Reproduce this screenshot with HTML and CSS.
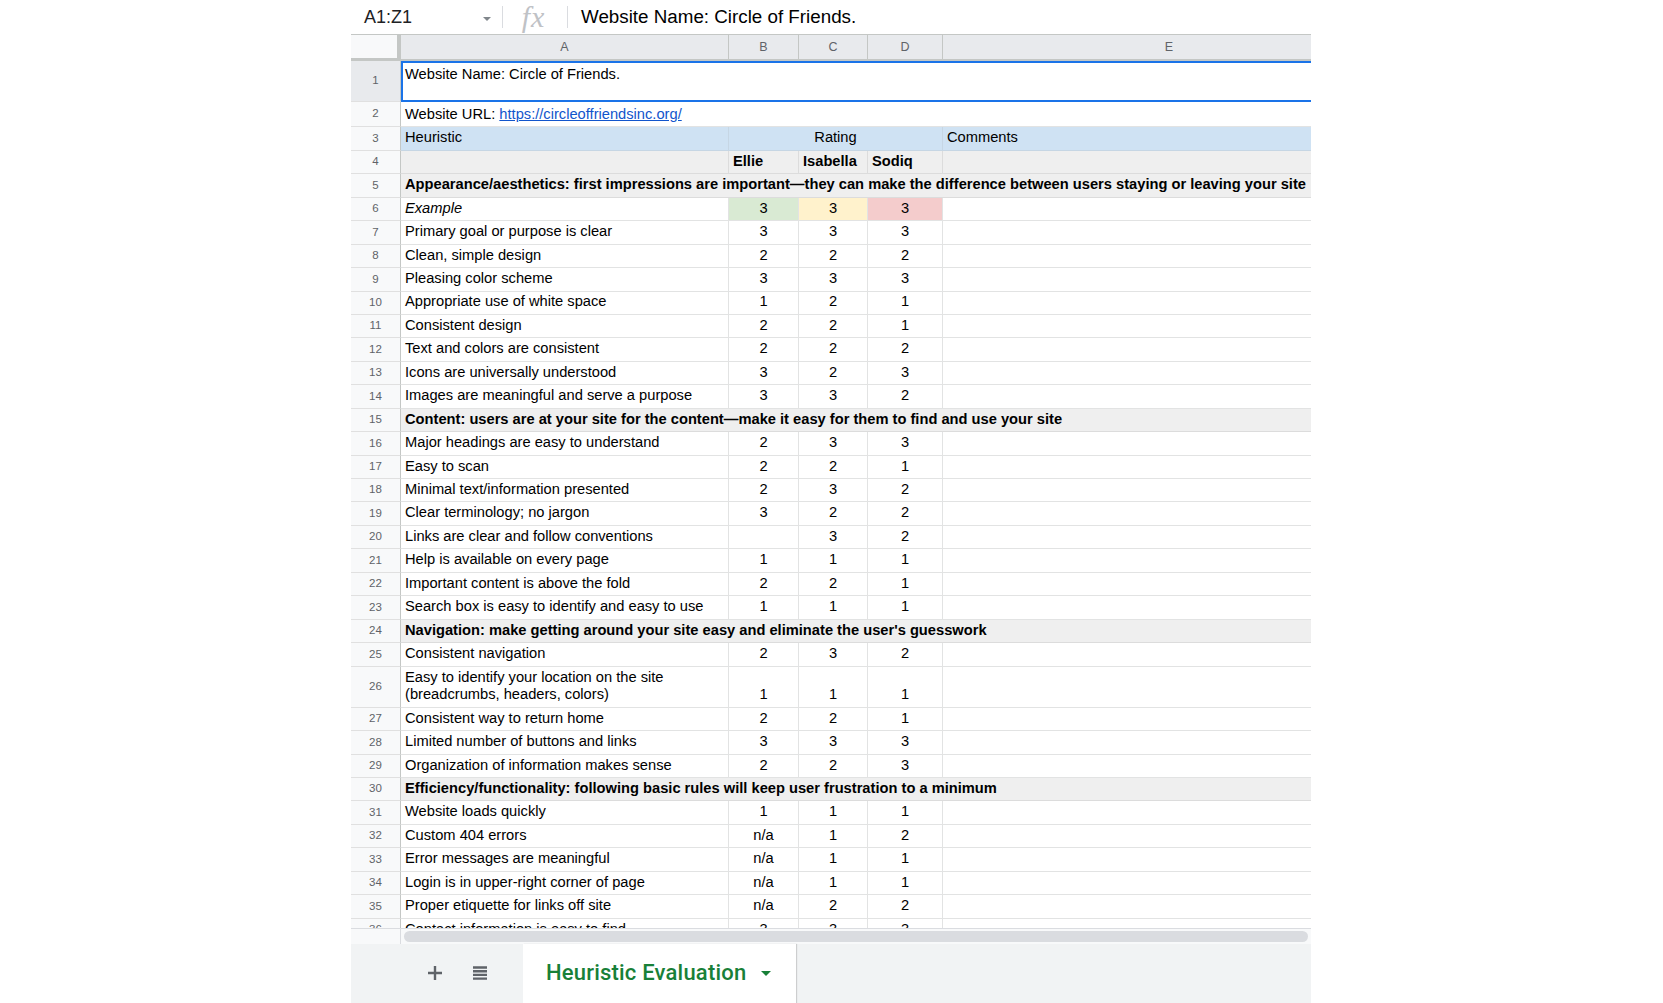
FILE: index.html
```html
<!DOCTYPE html>
<html>
<head>
<meta charset="utf-8">
<link rel="stylesheet" href="styles.css">
</head>
<body>
<div class="app">
  <div class="formula-bar">
    <div class="namebox"><span class="range">A1:Z1</span><span class="caret"></span></div>
    <div class="sep"></div>
    <div class="fx">fx</div>
    <div class="sep"></div>
    <div class="formula">Website Name: Circle of Friends.</div>
  </div>
  <div class="grid">
    <div class="row head">
      <div class="corner"></div>
      <div class="ch">A</div><div class="ch">B</div><div class="ch">C</div><div class="ch">D</div><div class="ch">E</div>
    </div>
    <div class="row r1">
      <div class="rh sel">1</div>
      <div class="c wide selbox">Website Name: Circle of Friends.</div>
    </div>
    <div class="row r2">
      <div class="rh">2</div>
      <div class="c wide">Website URL:&nbsp;<a class="link" href="#">https://circleoffriendsinc.org/</a></div>
    </div>
    <div class="row blue">
      <div class="rh">3</div>
      <div class="c">Heuristic</div>
      <div class="c merged">Rating</div>
      <div class="c">Comments</div>
    </div>
    <div class="row gray b">
      <div class="rh">4</div>
      <div class="c"></div><div class="c">Ellie</div><div class="c">Isabella</div><div class="c">Sodiq</div><div class="c"></div>
    </div>
    <div class="row gray b">
      <div class="rh">5</div>
      <div class="c wide">Appearance/aesthetics: first impressions are important—they can make the difference between users staying or leaving your site</div>
    </div>
    <div class="row">
      <div class="rh">6</div>
      <div class="c i">Example</div><div class="c n green">3</div><div class="c n yellow">3</div><div class="c n red">3</div><div class="c"></div>
    </div>
    <div class="row"><div class="rh">7</div><div class="c">Primary goal or purpose is clear</div><div class="c n">3</div><div class="c n">3</div><div class="c n">3</div><div class="c"></div></div>
    <div class="row"><div class="rh">8</div><div class="c">Clean, simple design</div><div class="c n">2</div><div class="c n">2</div><div class="c n">2</div><div class="c"></div></div>
    <div class="row"><div class="rh">9</div><div class="c">Pleasing color scheme</div><div class="c n">3</div><div class="c n">3</div><div class="c n">3</div><div class="c"></div></div>
    <div class="row"><div class="rh">10</div><div class="c">Appropriate use of white space</div><div class="c n">1</div><div class="c n">2</div><div class="c n">1</div><div class="c"></div></div>
    <div class="row"><div class="rh">11</div><div class="c">Consistent design</div><div class="c n">2</div><div class="c n">2</div><div class="c n">1</div><div class="c"></div></div>
    <div class="row"><div class="rh">12</div><div class="c">Text and colors are consistent</div><div class="c n">2</div><div class="c n">2</div><div class="c n">2</div><div class="c"></div></div>
    <div class="row"><div class="rh">13</div><div class="c">Icons are universally understood</div><div class="c n">3</div><div class="c n">2</div><div class="c n">3</div><div class="c"></div></div>
    <div class="row"><div class="rh">14</div><div class="c">Images are meaningful and serve a purpose</div><div class="c n">3</div><div class="c n">3</div><div class="c n">2</div><div class="c"></div></div>
    <div class="row gray b"><div class="rh">15</div><div class="c wide">Content: users are at your site for the content—make it easy for them to find and use your site</div></div>
    <div class="row"><div class="rh">16</div><div class="c">Major headings are easy to understand</div><div class="c n">2</div><div class="c n">3</div><div class="c n">3</div><div class="c"></div></div>
    <div class="row"><div class="rh">17</div><div class="c">Easy to scan</div><div class="c n">2</div><div class="c n">2</div><div class="c n">1</div><div class="c"></div></div>
    <div class="row"><div class="rh">18</div><div class="c">Minimal text/information presented</div><div class="c n">2</div><div class="c n">3</div><div class="c n">2</div><div class="c"></div></div>
    <div class="row"><div class="rh">19</div><div class="c">Clear terminology; no jargon</div><div class="c n">3</div><div class="c n">2</div><div class="c n">2</div><div class="c"></div></div>
    <div class="row"><div class="rh">20</div><div class="c">Links are clear and follow conventions</div><div class="c n"></div><div class="c n">3</div><div class="c n">2</div><div class="c"></div></div>
    <div class="row"><div class="rh">21</div><div class="c">Help is available on every page</div><div class="c n">1</div><div class="c n">1</div><div class="c n">1</div><div class="c"></div></div>
    <div class="row"><div class="rh">22</div><div class="c">Important content is above the fold</div><div class="c n">2</div><div class="c n">2</div><div class="c n">1</div><div class="c"></div></div>
    <div class="row"><div class="rh">23</div><div class="c">Search box is easy to identify and easy to use</div><div class="c n">1</div><div class="c n">1</div><div class="c n">1</div><div class="c"></div></div>
    <div class="row gray b"><div class="rh">24</div><div class="c wide">Navigation: make getting around your site easy and eliminate the user's guesswork</div></div>
    <div class="row"><div class="rh">25</div><div class="c">Consistent navigation</div><div class="c n">2</div><div class="c n">3</div><div class="c n">2</div><div class="c"></div></div>
    <div class="row tall"><div class="rh">26</div><div class="c wrap">Easy to identify your location on the site (breadcrumbs, headers, colors)</div><div class="c n">1</div><div class="c n">1</div><div class="c n">1</div><div class="c"></div></div>
    <div class="row"><div class="rh">27</div><div class="c">Consistent way to return home</div><div class="c n">2</div><div class="c n">2</div><div class="c n">1</div><div class="c"></div></div>
    <div class="row"><div class="rh">28</div><div class="c">Limited number of buttons and links</div><div class="c n">3</div><div class="c n">3</div><div class="c n">3</div><div class="c"></div></div>
    <div class="row"><div class="rh">29</div><div class="c">Organization of information makes sense</div><div class="c n">2</div><div class="c n">2</div><div class="c n">3</div><div class="c"></div></div>
    <div class="row gray b"><div class="rh">30</div><div class="c wide">Efficiency/functionality: following basic rules will keep user frustration to a minimum</div></div>
    <div class="row"><div class="rh">31</div><div class="c">Website loads quickly</div><div class="c n">1</div><div class="c n">1</div><div class="c n">1</div><div class="c"></div></div>
    <div class="row"><div class="rh">32</div><div class="c">Custom 404 errors</div><div class="c n">n/a</div><div class="c n">1</div><div class="c n">2</div><div class="c"></div></div>
    <div class="row"><div class="rh">33</div><div class="c">Error messages are meaningful</div><div class="c n">n/a</div><div class="c n">1</div><div class="c n">1</div><div class="c"></div></div>
    <div class="row"><div class="rh">34</div><div class="c">Login is in upper-right corner of page</div><div class="c n">n/a</div><div class="c n">1</div><div class="c n">1</div><div class="c"></div></div>
    <div class="row"><div class="rh">35</div><div class="c">Proper etiquette for links off site</div><div class="c n">n/a</div><div class="c n">2</div><div class="c n">2</div><div class="c"></div></div>
    <div class="row"><div class="rh">36</div><div class="c">Contact information is easy to find</div><div class="c n">3</div><div class="c n">3</div><div class="c n">3</div><div class="c"></div></div>
  </div>
  <div class="hscroll">
    <div class="hs-corner"></div>
    <div class="hs-track"><div class="thumb"></div></div>
  </div>
  <div class="tabbar">
    <div class="tab-tools">
      <svg class="ico" width="18" height="18" viewBox="0 0 18 18"><path d="M9 2v14M2 9h14" stroke="#5f6368" stroke-width="2.4" fill="none"/></svg>
      <svg class="ico" width="18" height="18" viewBox="0 0 18 18"><path d="M2 3.5h14M2 7.2h14M2 10.9h14M2 14.6h14" stroke="#5f6368" stroke-width="2.4" fill="none"/></svg>
    </div>
    <div class="tab"><span class="tab-name">Heuristic Evaluation</span><span class="tab-caret"></span></div>
    <div class="tab-rest"></div>
  </div>
</div>
</body>
</html>
```

FILE: styles.css
```css
* { box-sizing: border-box; }
html, body { margin: 0; padding: 0; background: #ffffff; }
body { font-family: "Liberation Sans", Arial, sans-serif; color: #000; }

.app {
  width: 960px;
  margin-left: 351px;
  height: 1003px;
  display: flex;
  flex-direction: column;
  overflow: hidden;
}

/* formula bar */
.formula-bar {
  height: 34px;
  display: flex;
  align-items: center;
  background: #fff;
  flex: none;
}
.namebox {
  width: 151px;
  height: 100%;
  display: flex;
  align-items: center;
  padding-left: 13px;
}
.range { font-size: 18px; color: #202124; flex: 1; }
.caret {
  width: 0; height: 0;
  border-left: 4px solid transparent;
  border-right: 4px solid transparent;
  border-top: 4px solid #80868b;
  margin-right: 11px;
  margin-top: 3px;
}
.sep { width: 1px; height: 22px; background: #dadce0; flex: none; }
.fx {
  width: 64px;
  text-align: center;
  font-family: "Liberation Serif", serif;
  font-style: italic;
  font-size: 30px;
  color: #bfc2c6;
  line-height: 34px;
  letter-spacing: 1px;
  padding-right: 3px;
}
.formula { padding-left: 13px; font-size: 18.8px; color: #000; }

/* grid */
.grid {
  height: 893.5px;
  overflow: hidden;
  flex: none;
  border-top: 1px solid #c4c7c5;
}
.row {
  display: grid;
  grid-template-columns: 50px 328px 70px 69px 75px 452px;
  width: 1044px;
  height: 23.45px;
  font-size: 14.68px;
  line-height: 17.5px;
}
.row.head { height: 26px; }
.row.r1 { height: 41px; }
.row.r2 { height: 25.45px; }
.row.tall { height: 41.2px; }

.corner {
  background: #f8f9fa;
  border-right: 4px solid #c4c7c5;
  border-bottom: 3px solid #c4c7c5;
}
.ch {
  background: #e8eaed;
  border-right: 1px solid #c4c7c5;
  border-bottom: 2px solid #c4c7c5;
  font-size: 12.5px;
  color: #5f6368;
  display: flex;
  align-items: center;
  justify-content: center;
  padding-top: 1px;
}
.ch:last-child { border-right: none; }

.rh {
  background: #f8f9fa;
  border-right: 1px solid #c4c7c5;
  border-bottom: 1px solid #e0e0e0;
  font-size: 11.5px;
  color: #5f6368;
  display: flex;
  align-items: center;
  justify-content: center;
}
.rh.sel { background: #e8eaed; }

.c {
  border-right: 1px solid #e2e3e3;
  border-bottom: 1px solid #e2e3e3;
  padding: 0 4px 3px 4px;
  display: flex;
  align-items: flex-end;
  white-space: nowrap;
  overflow: hidden;
}
.c:last-child { border-right: none; }
.c.wide { grid-column: 2 / -1; }
.c.merged { grid-column: 3 / 6; justify-content: center; }
.c.n { justify-content: center; }
.c.i { font-style: italic; }
.c.wrap { white-space: normal; padding-bottom: 3px; }

.selbox {
  border: 2px solid #1a73e8;
  border-right: none;
  align-items: flex-start;
  padding: 3px 3px 0 2px;
}
.link { color: #1155cc; text-decoration: underline; }

.blue .c { background: #cfe2f3; border-color: #c6d6e4; }
.gray .c { background: #efefef; border-color: #dcdcdc; }
.b .c { font-weight: bold; }
.green { background: #d9ead3; }
.yellow { background: #fff2cc; }
.red { background: #f4cccc; }

/* horizontal scroll */
.hscroll {
  height: 16.5px;
  display: flex;
  flex: none;
  border-top: 1px solid #dadce0;
}
.hs-corner { width: 50px; background: #f8f9fa; border-right: 1px solid #dadce0; }
.hs-track { flex: 1; background: #f8f9fa; padding: 2px 3px 2px 3px; }
.thumb { height: 100%; background: #dadce0; border-radius: 6px; }

/* tab bar */
.tabbar {
  flex: 1;
  display: flex;
  background: #f1f3f4;
}
.tab-tools {
  width: 172px;
  display: flex;
  align-items: center;
  justify-content: flex-end;
  gap: 27px;
  padding-right: 34px;
  padding-bottom: 2px;
}
.ico { display: block; }
.tab {
  width: 273px;
  background: #fff;
  display: flex;
  align-items: center;
  padding-left: 23px;
  padding-bottom: 3px;
  box-shadow: 1px 0 1px rgba(0,0,0,0.15);
}
.tab-name {
  font-family: Roboto, "Liberation Sans", sans-serif;
  font-weight: 500;
  font-size: 22px;
  color: #188038;
  letter-spacing: 0.2px;
}
.tab-caret {
  width: 0; height: 0;
  border-left: 5px solid transparent;
  border-right: 5px solid transparent;
  border-top: 5px solid #188038;
  margin-left: 15px;
  margin-top: 2px;
}
.tab-rest { flex: 1; }
```
